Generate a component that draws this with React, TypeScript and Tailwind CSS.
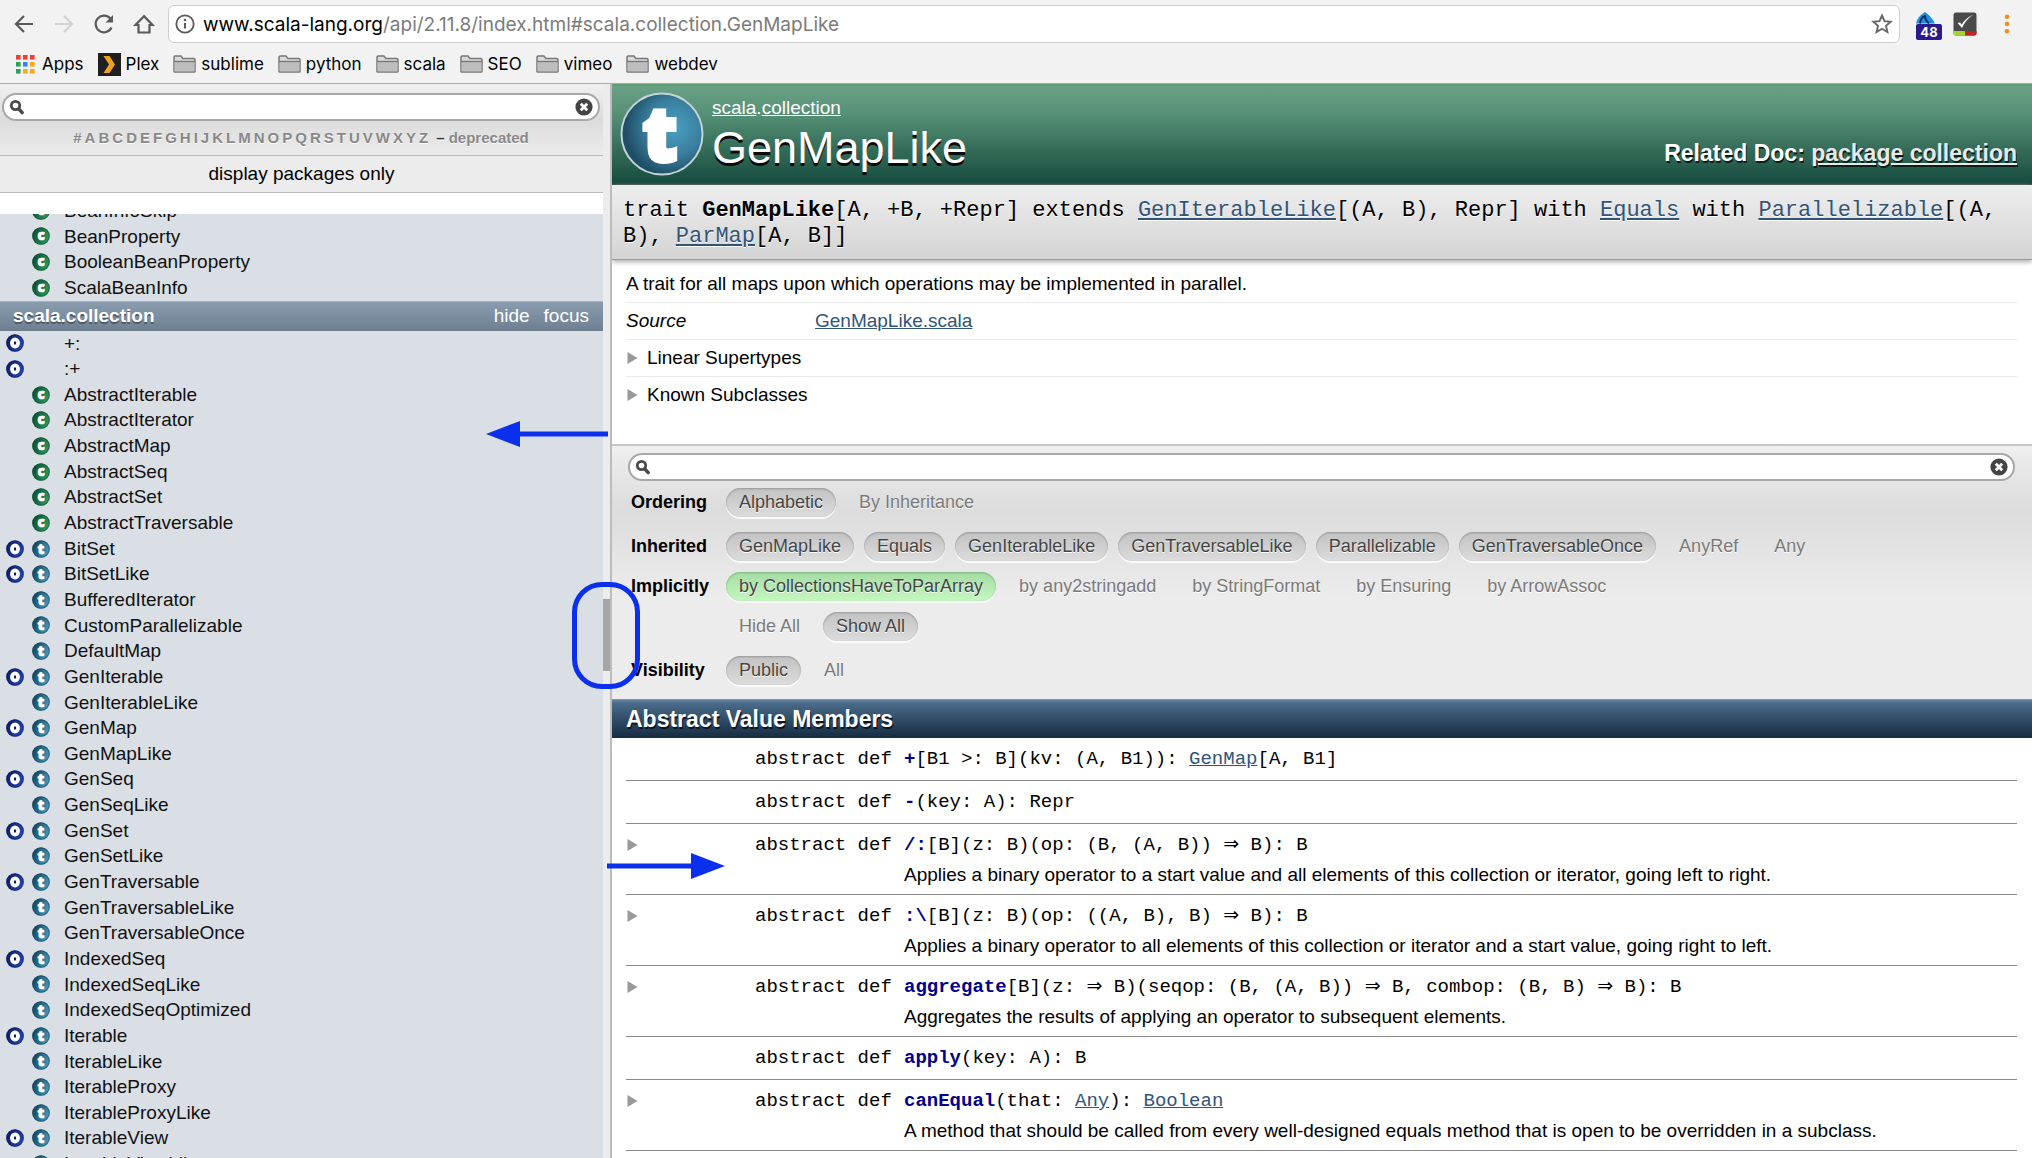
import React from "react";

const SANS = "font-['Liberation_Sans',Arial,sans-serif]";
const MONO = "font-['Liberation_Mono','Courier_New',monospace]";

type Entity = { name: string; object?: boolean; kind?: "c" | "t" };

const BEANS: Entity[] = [
  { name: "BeanInfoSkip", kind: "c" },
  { name: "BeanProperty", kind: "c" },
  { name: "BooleanBeanProperty", kind: "c" },
  { name: "ScalaBeanInfo", kind: "c" },
];

const COLLECTION: Entity[] = [
  { name: "+:", object: true },
  { name: ":+", object: true },
  { name: "AbstractIterable", kind: "c" },
  { name: "AbstractIterator", kind: "c" },
  { name: "AbstractMap", kind: "c" },
  { name: "AbstractSeq", kind: "c" },
  { name: "AbstractSet", kind: "c" },
  { name: "AbstractTraversable", kind: "c" },
  { name: "BitSet", object: true, kind: "t" },
  { name: "BitSetLike", object: true, kind: "t" },
  { name: "BufferedIterator", kind: "t" },
  { name: "CustomParallelizable", kind: "t" },
  { name: "DefaultMap", kind: "t" },
  { name: "GenIterable", object: true, kind: "t" },
  { name: "GenIterableLike", kind: "t" },
  { name: "GenMap", object: true, kind: "t" },
  { name: "GenMapLike", kind: "t" },
  { name: "GenSeq", object: true, kind: "t" },
  { name: "GenSeqLike", kind: "t" },
  { name: "GenSet", object: true, kind: "t" },
  { name: "GenSetLike", kind: "t" },
  { name: "GenTraversable", object: true, kind: "t" },
  { name: "GenTraversableLike", kind: "t" },
  { name: "GenTraversableOnce", kind: "t" },
  { name: "IndexedSeq", object: true, kind: "t" },
  { name: "IndexedSeqLike", kind: "t" },
  { name: "IndexedSeqOptimized", kind: "t" },
  { name: "Iterable", object: true, kind: "t" },
  { name: "IterableLike", kind: "t" },
  { name: "IterableProxy", kind: "t" },
  { name: "IterableProxyLike", kind: "t" },
  { name: "IterableView", object: true, kind: "t" },
  { name: "IterableViewLike", kind: "t" },
];

/* ---------- icons ---------- */

const BADGE = {
  o: { dark: "#0b1b5c", light: "#2548b8", size: 56, y: 65 },
  c: { dark: "#0a4a2c", light: "#2c9a63", size: 74, y: 70 },
  t: { dark: "#123f55", light: "#3f9cc0", size: 82, y: 78 },
};

function Badge({ kind }: { kind: "o" | "c" | "t" }) {
  const b = BADGE[kind];
  return (
    <svg viewBox="0 0 100 100" className="size-[18px] shrink-0 overflow-visible" aria-hidden="true">
      <defs>
        <linearGradient id={"badge-" + kind} x1="0" y1="0.2" x2="1" y2="0.6">
          <stop offset="0" stopColor={b.dark} />
          <stop offset="1" stopColor={b.light} />
        </linearGradient>
      </defs>
      <circle cx="50" cy="50" r="49" fill={"url(#badge-" + kind + ")"} />
      <circle cx="50" cy="50" r="46" fill="none" stroke={b.dark} strokeWidth="6" opacity="0.5" />
      {kind === "o" ? (
        <ellipse cx="50" cy="50" rx="17" ry="20" fill={b.dark} stroke="#fff" strokeWidth="21" />
      ) : (
        <text
          x="50"
          y={b.y}
          textAnchor="middle"
          fill="#fff"
          stroke="#fff"
          strokeWidth="4"
          fontSize={b.size}
          fontWeight="800"
          fontFamily="Open Sans, sans-serif"
        >
          {kind}
        </text>
      )}
    </svg>
  );
}

function TraitLogo() {
  return (
    <svg viewBox="0 0 84 84" className="size-[84px] shrink-0 overflow-visible" role="img" aria-label="Trait">
      <defs>
        <radialGradient id="trait-disc" cx="0.65" cy="0.42" r="0.6">
          <stop offset="0" stopColor="#4a9fc2" />
          <stop offset="0.55" stopColor="#3a80a0" />
          <stop offset="1" stopColor="#1f4f66" />
        </radialGradient>
      </defs>
      <circle cx="42" cy="42" r="40.5" fill="url(#trait-disc)" stroke="#c3d3d6" strokeWidth="2" />
      <text
        x="40"
        y="69"
        textAnchor="middle"
        fill="#fff"
        stroke="#fff"
        strokeWidth="4"
        fontSize="76"
        fontWeight="800"
        fontFamily="Open Sans, sans-serif"
      >
        t
      </text>
    </svg>
  );
}

function Folder() {
  return (
    <svg viewBox="0 0 23 18" className="h-[18px] w-[23px] shrink-0" aria-hidden="true">
      <path d="M1 16.5V2.2Q1 1 2.2 1H8l2 2.6h10.8Q22 3.6 22 4.8V16.5Q22 17 21.2 17H1.8Q1 17 1 16.5Z" fill="#d9d9d9" stroke="#777" strokeWidth="1.5" />
      <path d="M1.5 7.2h20V16.3h-20Z" fill="#bdbdbd" />
      <path d="M1 6.5h21" stroke="#777" strokeWidth="1.4" />
    </svg>
  );
}

function AppsGrid() {
  const colors = ["#ee4135", "#ee4135", "#ee4135", "#2f9e58", "#3b82f0", "#f5a623", "#2f9e58", "#f5a623", "#f5a623"];
  return (
    <svg viewBox="0 0 19 19" className="size-[19px] shrink-0" aria-hidden="true">
      {colors.map((c, i) => (
        <rect key={i} x={(i % 3) * 7} y={Math.floor(i / 3) * 7} width="4.6" height="4.6" fill={c} />
      ))}
    </svg>
  );
}

function Magnifier() {
  return (
    <svg viewBox="0 0 16 16" className="size-4 shrink-0" aria-hidden="true">
      <circle cx="6.5" cy="6.5" r="4.2" fill="none" stroke="#4a4a4a" strokeWidth="2.8" />
      <path d="M9.8 10l3.4 3.6" stroke="#4a4a4a" strokeWidth="3.4" strokeLinecap="round" />
    </svg>
  );
}

function ClearIcon() {
  return (
    <svg viewBox="0 0 18 18" className="size-[18px]" aria-hidden="true">
      <circle cx="9" cy="9" r="8.6" fill="#444" />
      <path d="M5.8 5.8l6.4 6.4M12.2 5.8l-6.4 6.4" stroke="#fff" strokeWidth="2.8" />
    </svg>
  );
}

function Triangle() {
  return (
    <svg viewBox="0 0 11 12" className="h-3 w-[11px] shrink-0" aria-hidden="true">
      <path d="M0.5 0L10.5 6L0.5 12Z" fill="#999" />
    </svg>
  );
}

/* ---------- browser chrome ---------- */

function NavButton({ label, children }: { label: string; children: React.ReactNode }) {
  return (
    <button type="button" aria-label={label} className="flex size-6 items-center justify-center">
      <svg viewBox="0 0 24 24" className="size-6" fill="none" stroke="#5a5a5a" strokeWidth="2.2">
        {children}
      </svg>
    </button>
  );
}

function BrowserBar() {
  const folders = ["sublime", "python", "scala", "SEO", "vimeo", "webdev"];
  return (
    <header className="shrink-0 border-b border-[#a9a9a9] bg-[#f2f2f2] font-[Inter,sans-serif] text-black">
      <div className="flex h-[48px] items-center gap-4 pl-3 pr-[22px]">
        <div className="flex items-center gap-4">
          <NavButton label="Back">
            <path d="M21 12H4M12 4l-8 8 8 8" />
          </NavButton>
          <NavButton label="Forward">
            <path d="M3 12h17M12 4l8 8-8 8" stroke="#d3d3d3" />
          </NavButton>
          <NavButton label="Reload">
            <path d="M19.5 15.5A8.3 8.3 0 1 1 18.5 6.8" />
            <path d="M21 3v7.5h-7.5Z" fill="#5a5a5a" stroke="none" />
          </NavButton>
          <NavButton label="Home">
            <path d="M12 4.2L3.5 13H6.5V20.5H17.5V13H20.5Z" />
          </NavButton>
        </div>
        <div className="-ml-1 flex h-[38px] min-w-0 flex-1 items-center rounded-md border border-[#cfcfcf] bg-white pl-[6px] pr-[6px]">
          <svg viewBox="0 0 20 20" className="size-5 shrink-0" fill="none" stroke="#5a5a5a" aria-hidden="true">
            <circle cx="10" cy="10" r="8.7" strokeWidth="1.8" />
            <path d="M10 9v5.5" strokeWidth="2" />
            <circle cx="10" cy="6" r="1.3" fill="#5a5a5a" stroke="none" />
          </svg>
          <div className="min-w-0 flex-1 truncate pl-2 pt-[2px] text-[19px] leading-6 text-[#7b7b7b]">
            <span className="text-black">www.scala-lang.org</span>/api/2.11.8/index.html#scala.collection.GenMapLike
          </div>
          <button type="button" aria-label="Bookmark this page">
            <svg viewBox="0 0 22 22" className="size-[22px]" fill="none" stroke="#666" strokeWidth="1.9" aria-hidden="true">
              <path d="M11 2.5l2.5 5.7 6.2.6-4.7 4.1 1.4 6.1L11 15.8 5.6 19l1.4-6.1L2.3 8.8l6.2-.6Z" />
            </svg>
          </button>
        </div>
        <div className="flex items-center gap-[11px]">
          <button type="button" aria-label="Ruler extension, 48" className="flex flex-col items-center pt-1">
            <svg viewBox="0 0 26 12" className="h-3 w-[26px]" aria-hidden="true">
              <path d="M0 11.5Q1 5 9 0Q16 5 19 11.5Z" fill="#1f8fdc" />
              <path d="M4 11.5Q5 5 9 4Q9 8 13 11.5" fill="none" stroke="#0b2f66" strokeWidth="2" />
            </svg>
            <span className="rounded-xs bg-[#2b1a8c] px-1 text-[13px] font-bold leading-4 text-white">48</span>
          </button>
          <button type="button" aria-label="Checker extension">
            <svg viewBox="0 0 24 24" className="size-6" aria-hidden="true">
              <rect x="0.5" y="0.5" width="23" height="23" rx="2.5" fill="#4a4a4a" />
              <path d="M0.5 19h11.5v4.5H3Q0.5 23.5 0.5 21Z" fill="#a6d42f" />
              <path d="M12 19h11.5v2Q23.5 23.5 21 23.5H12Z" fill="#c4231c" />
              <path d="M4.5 11l4.5 5Q13 7 20.5 2.5Q12 6.5 8.8 12.5L7 10.5Z" fill="#fff" />
            </svg>
          </button>
          <button type="button" aria-label="Menu" className="pl-4">
            <svg viewBox="0 0 6 20" className="h-5 w-[6px]" fill="#f28c1d" aria-hidden="true">
              <circle cx="3" cy="2.8" r="2.3" />
              <circle cx="3" cy="10" r="2.3" />
              <circle cx="3" cy="17.2" r="2.3" />
            </svg>
          </button>
        </div>
      </div>
      <nav aria-label="Bookmarks" className="flex h-[35px] items-start gap-[14px] pl-4 pt-1 text-[17px] leading-6">
        <a href="#apps" className="flex items-center gap-[7px]">
          <AppsGrid />
          Apps
        </a>
        <a href="#plex" className="flex items-center gap-[5px]">
          <svg viewBox="0 0 23 23" className="size-[23px] shrink-0" aria-hidden="true">
            <rect width="23" height="23" fill="#1f1f1f" />
            <path d="M5.5 3h6l5.5 8.5-5.5 8.5h-6L11 11.5Z" fill="#f0a01c" />
          </svg>
          Plex
        </a>
        {folders.map((f) => (
          <a key={f} href={"#" + f} className="flex items-center gap-[5px]">
            <Folder />
            {f}
          </a>
        ))}
      </nav>
    </header>
  );
}

/* ---------- sidebar ---------- */

function SearchField({ label, id }: { label: string; id: string }) {
  return (
    <div className="flex h-[28px] items-center rounded-full border-2 border-[#a8a8a8] bg-white px-[5px]">
      <label htmlFor={id} aria-label={label}>
        <Magnifier />
      </label>
      <input id={id} type="text" className="h-full min-w-0 flex-1 bg-transparent px-2 text-base outline-none" />
      <button type="button" aria-label="Clear search">
        <ClearIcon />
      </button>
    </div>
  );
}

function EntityList({ items }: { items: Entity[] }) {
  return (
    <ul className="pl-[6px] text-[19px] leading-[1.35]">
      {items.map((e) => (
        <li key={e.name} className="flex items-center">
          <span className="w-[26px]">{e.object && <Badge kind="o" />}</span>
          <span className="w-8">{e.kind && <Badge kind={e.kind} />}</span>
          <a href={"#" + e.name}>{e.name}</a>
        </li>
      ))}
    </ul>
  );
}

function Sidebar() {
  const letters = "#ABCDEFGHIJKLMNOPQRSTUVWXYZ".split("");
  return (
    <aside className="flex min-h-0 w-[612px] shrink-0 border-r-2 border-[#bcbcbc] bg-[#ececec]">
      <div className="flex min-h-0 min-w-0 flex-1 flex-col">
        <div className="bg-linear-to-b from-[#f0f0f0] via-[#dcdcdc] to-[#ebebeb] pl-[2px] pr-[3px] pt-[9px]">
          <SearchField id="index-search" label="Search the index" />
          <div className="flex h-[34px] items-center justify-center gap-2 text-[15px] font-bold text-[#888] [text-shadow:0_1px_0_#fff]">
            <div className="flex gap-[3px]">
              {letters.map((l) => (
                <a key={l} href={"#letter-" + l}>
                  {l}
                </a>
              ))}
            </div>
            <div>
              <span className="text-[#333]">–</span> <a href="#deprecated">deprecated</a>
            </div>
          </div>
        </div>
        <button type="button" className="h-[38px] border-y border-[#bbb] bg-[#ececec] text-[19px] text-black">
          display packages only
        </button>
        <div className="h-[21px] bg-white" />
        <div className="min-h-0 flex-1 overflow-hidden bg-[#dadfe6] text-[#111]">
          <div className="-mt-4">
            <EntityList items={BEANS} />
          </div>
          <div className="flex h-[30px] items-center border-t border-[#a3b2c0] bg-linear-to-b from-[#8a9db0] to-[#6d7f8f] pl-[13px] pr-[14px] text-[19px] text-white">
            <h3 className="flex-1 font-bold [text-shadow:0_2px_0_#4c5a68]">scala.collection</h3>
            <div className="flex gap-[14px]">
              <button type="button">hide</button>
              <button type="button">focus</button>
            </div>
          </div>
          <EntityList items={COLLECTION} />
        </div>
      </div>
      <div className="flex w-[7px] flex-col justify-center pt-7">
        <div className="h-[72px] bg-[#a6a6a6]" />
      </div>
    </aside>
  );
}

/* ---------- main document ---------- */

function TypeLink({ children }: { children: string }) {
  return (
    <a href={"#" + children} className="text-[#315479] underline">
      {children}
    </a>
  );
}

function Pill({ children, state = "off" }: { children: string; state?: "on" | "off" | "green" }) {
  const look = {
    on: "bg-linear-to-b from-[#c2c2c2] to-[#dcdcdc] text-[#444] shadow-[inset_0_1px_2px_#999,0_2px_0_#fafafa]",
    green: "bg-linear-to-b from-[#a5dca4] to-[#c4f7c0] text-[#444] shadow-[inset_0_1px_2px_#7fb57f,0_2px_0_#fafafa]",
    off: "text-[#7a7a7a]",
  }[state];
  return (
    <button type="button" aria-pressed={state !== "off"} className={"h-[29px] rounded-full px-[13px] [text-shadow:0_1px_0_#fff] " + look}>
      {children}
    </button>
  );
}

function FilterRow({ label, children }: { label: string; children: React.ReactNode }) {
  return (
    <div role="group" aria-label={label} className="flex">
      <div className="w-[95px] shrink-0 font-bold leading-[29px] text-black">{label}</div>
      <div className="flex flex-col gap-[11px]">{children}</div>
    </div>
  );
}

function PillLine({ children }: { children: React.ReactNode }) {
  return <div className="flex gap-[10px]">{children}</div>;
}

function Filters() {
  return (
    <section className="border-t-2 border-[#c6c6c6] bg-linear-to-b from-[#efefef] via-[#dcdcdc] via-25% to-[#ececec] to-60% pb-[14px] pt-[7px]">
      <div className="pl-4 pr-[17px]">
        <SearchField id="member-search" label="Search members" />
      </div>
      <div className="pl-[19px] pt-[7px] text-[18px]">
        <div className="flex flex-col gap-[15px]">
          <FilterRow label="Ordering">
            <PillLine>
              <Pill state="on">Alphabetic</Pill>
              <Pill>By Inheritance</Pill>
            </PillLine>
          </FilterRow>
          <div className="flex flex-col gap-[11px]">
            <FilterRow label="Inherited">
              <PillLine>
                <Pill state="on">GenMapLike</Pill>
                <Pill state="on">Equals</Pill>
                <Pill state="on">GenIterableLike</Pill>
                <Pill state="on">GenTraversableLike</Pill>
                <Pill state="on">Parallelizable</Pill>
                <Pill state="on">GenTraversableOnce</Pill>
                <Pill>AnyRef</Pill>
                <Pill>Any</Pill>
              </PillLine>
            </FilterRow>
            <FilterRow label="Implicitly">
              <PillLine>
                <Pill state="green">by CollectionsHaveToParArray</Pill>
                <Pill>by any2stringadd</Pill>
                <Pill>by StringFormat</Pill>
                <Pill>by Ensuring</Pill>
                <Pill>by ArrowAssoc</Pill>
              </PillLine>
              <PillLine>
                <Pill>Hide All</Pill>
                <Pill state="on">Show All</Pill>
              </PillLine>
            </FilterRow>
          </div>
          <FilterRow label="Visibility">
            <PillLine>
              <Pill state="on">Public</Pill>
              <Pill>All</Pill>
            </PillLine>
          </FilterRow>
        </div>
      </div>
    </section>
  );
}

function Arrow() {
  return <span className="font-['DejaVu_Sans',sans-serif] leading-none">⇒</span>;
}

type Member = { name: string; rest: React.ReactNode; note?: string };

const MEMBERS: Member[] = [
  {
    name: "+",
    rest: (
      <>
        [B1 &gt;: B](kv: (A, B1)): <TypeLink>GenMap</TypeLink>[A, B1]
      </>
    ),
  },
  { name: "-", rest: "(key: A): Repr" },
  {
    name: "/:",
    rest: (
      <>
        [B](z: B)(op: (B, (A, B)) <Arrow /> B): B
      </>
    ),
    note: "Applies a binary operator to a start value and all elements of this collection or iterator, going left to right.",
  },
  {
    name: ":\\",
    rest: (
      <>
        [B](z: B)(op: ((A, B), B) <Arrow /> B): B
      </>
    ),
    note: "Applies a binary operator to all elements of this collection or iterator and a start value, going right to left.",
  },
  {
    name: "aggregate",
    rest: (
      <>
        [B](z: <Arrow /> B)(seqop: (B, (A, B)) <Arrow /> B, combop: (B, B) <Arrow /> B): B
      </>
    ),
    note: "Aggregates the results of applying an operator to subsequent elements.",
  },
  { name: "apply", rest: "(key: A): B" },
  {
    name: "canEqual",
    rest: (
      <>
        (that: <TypeLink>Any</TypeLink>): <TypeLink>Boolean</TypeLink>
      </>
    ),
    note: "A method that should be called from every well-designed equals method that is open to be overridden in a subclass.",
  },
];

function MemberRow({ m }: { m: Member }) {
  return (
    <li className={"flex border-b border-[#8a8a8a] text-[19px] leading-[26px] " + (m.note ? "pb-[6px] pt-2" : "pb-2 pt-2")}>
      <div className="flex h-[26px] w-[129px] shrink-0 items-center pl-[1px]">
        {m.note && (
          <button type="button" aria-label={"Expand " + m.name}>
            <Triangle />
          </button>
        )}
      </div>
      <div className={"w-[149px] shrink-0 whitespace-nowrap " + MONO}>abstract def</div>
      <div className="min-w-0">
        <div className={"h-[26px] " + MONO}>
          <a href={"#member-" + m.name} className="font-bold text-[#00008b]">
            {m.name}
          </a>
          {m.rest}
        </div>
        {m.note && <p className="pt-1">{m.note}</p>}
      </div>
    </li>
  );
}

function Doc() {
  return (
    <main className="min-h-0 min-w-0 flex-1 overflow-hidden bg-white text-black">
      <div className="flex h-[101px] items-start border-b border-[#3b4f49] bg-linear-to-b from-[#6ba287] via-[#569076] via-30% to-[#134b3e] pl-2 pr-[15px] pt-2 text-white shadow-[inset_0_2px_0_#5c9f73]">
        <TraitLogo />
        <div className="flex-1 pl-2 pt-1">
          <p className="text-[19px] leading-6">
            <a href="#scala" className="underline">
              scala
            </a>
            .
            <a href="#collection" className="underline">
              collection
            </a>
          </p>
          <h1 className="pt-[5px] text-[45px] leading-[46px] [text-shadow:0_3px_0_#0a0a0a]">GenMapLike</h1>
        </div>
        <div className="self-end pb-[17px] text-[23px] font-bold leading-7 [text-shadow:1px_2px_0_#0a1f18]">
          Related Doc:{" "}
          <a href="#package" className="text-[#e8e8e8] underline">
            package collection
          </a>
        </div>
      </div>

      <div className={"relative border-b border-[#999] bg-linear-to-b from-[#eeeeee] to-[#d4d4d4] pb-[9px] pl-[11px] pr-3 pt-[13px] text-[22px] leading-[26px] shadow-[0_2px_5px_#aaa] [text-shadow:0_1px_0_#fff] " + MONO}>
        trait <b>GenMapLike</b>[A, +B, +Repr] extends <TypeLink>GenIterableLike</TypeLink>[(A, B), Repr] with{" "}
        <TypeLink>Equals</TypeLink> with <TypeLink>Parallelizable</TypeLink>[(A, B), <TypeLink>ParMap</TypeLink>[A, B]]
      </div>

      <div className="px-[14px] pb-[31px] pt-[6px] text-[19px] leading-9">
        <p className="border-b border-[#ebebeb]">A trait for all maps upon which operations may be implemented in parallel.</p>
        <dl className="flex border-b border-[#ebebeb]">
          <dt className="w-[189px] italic">Source</dt>
          <dd>
            <TypeLink>GenMapLike.scala</TypeLink>
          </dd>
        </dl>
        <button type="button" className="flex w-full items-center gap-[9px] border-b border-[#ebebeb] pl-[1px]">
          <Triangle />
          Linear Supertypes
        </button>
        <button type="button" className="flex w-full items-center gap-[9px] pl-[1px]">
          <Triangle />
          Known Subclasses
        </button>
      </div>

      <Filters />

      <section>
        <h2 className="border-t border-[#7f95a8] bg-linear-to-b from-[#4f7190] to-[#162c42] pl-[14px] text-[23px] font-bold leading-[38px] text-white shadow-[inset_0_2px_0_#5a7c99] [text-shadow:1px_2px_0_#0b1622]">
          Abstract Value Members
        </h2>
        <ol className="pl-[14px] pr-[15px]">
          {MEMBERS.map((m) => (
            <MemberRow key={m.name} m={m} />
          ))}
        </ol>
      </section>
    </main>
  );
}

/* Arrows and ring pointing out the draggable splitter. */
function Markers() {
  return (
    <div className="pointer-events-none absolute inset-y-0 left-[610px]" aria-hidden="true">
      <svg viewBox="0 0 122 26" className="absolute -left-[124px] top-[337px] h-[26px] w-[122px]">
        <path d="M0 13L34 0V10.5H122V15.5H34V26Z" fill="#0a30ee" />
      </svg>
      <div className="absolute -left-[38px] top-[498px] h-[107px] w-[68px] rounded-[30px] border-5 border-[#0a30ee]" />
      <svg viewBox="0 0 118 26" className="absolute -left-[3px] top-[769px] h-[26px] w-[118px]">
        <path d="M118 13L84 0V10.5H0V15.5H84V26Z" fill="#0a30ee" />
      </svg>
    </div>
  );
}

export default function App() {
  return (
    <div className={"flex h-screen flex-col overflow-hidden bg-white " + SANS}>
      <BrowserBar />
      <div className="relative flex min-h-0 flex-1">
        <Sidebar />
        <Doc />
        <Markers />
      </div>
    </div>
  );
}
